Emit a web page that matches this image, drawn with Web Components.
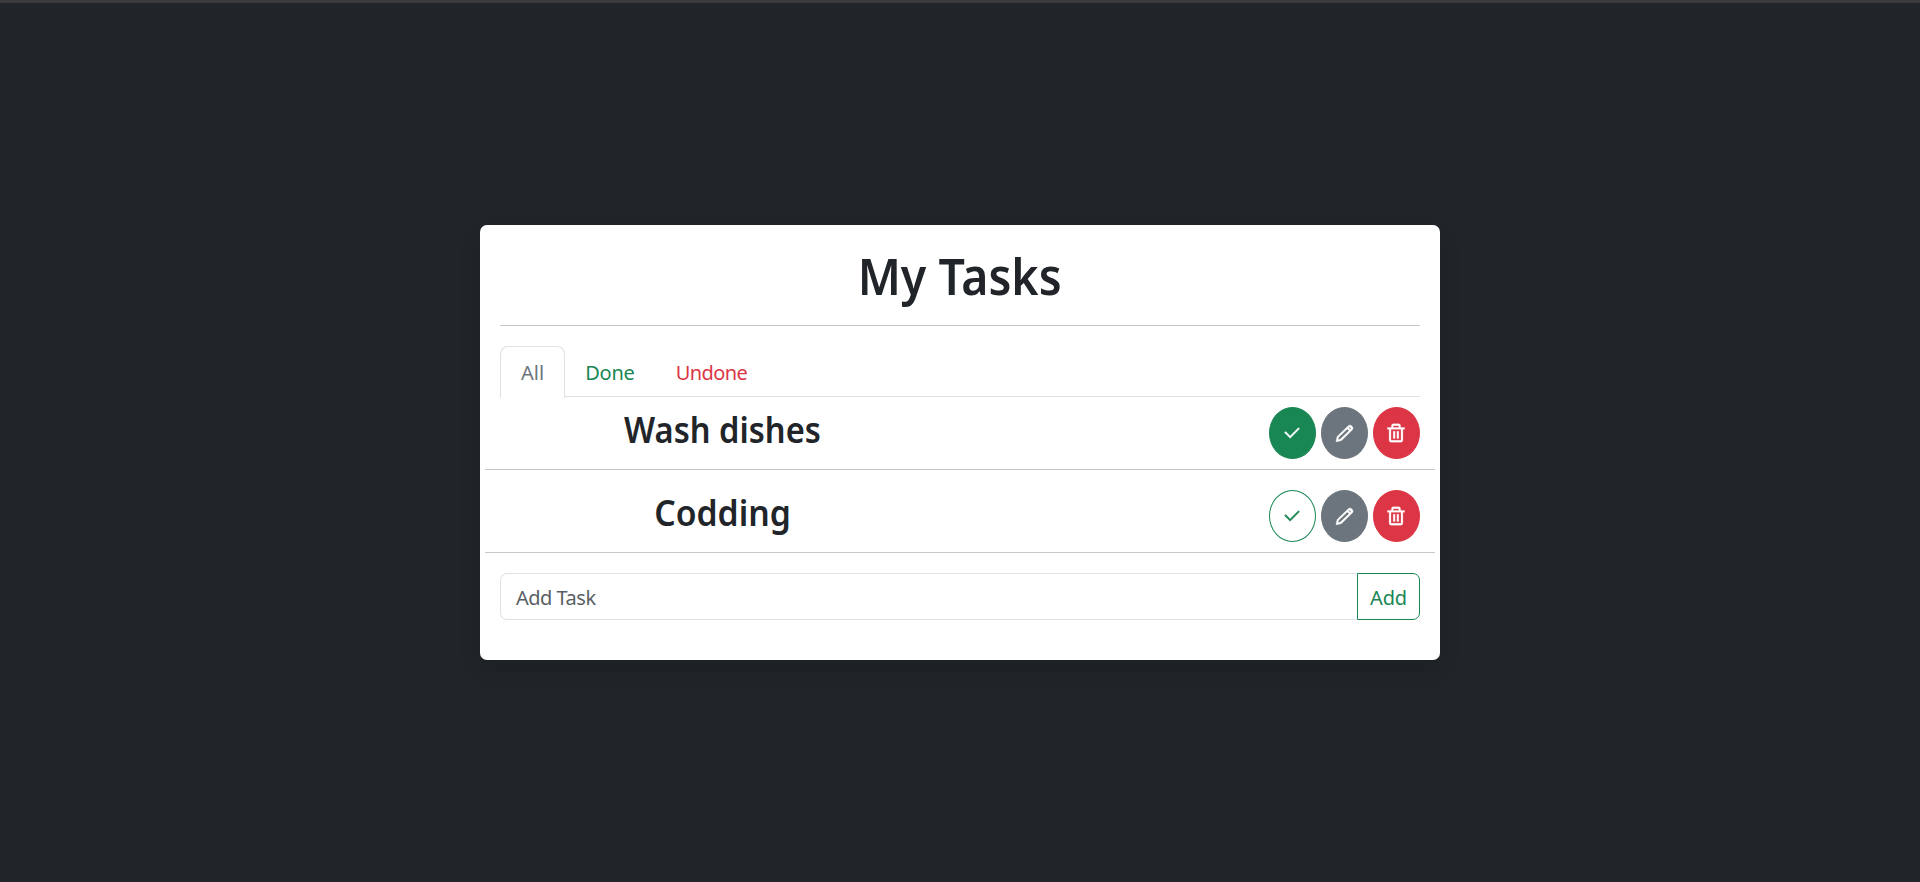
<!DOCTYPE html>
<html lang="en">
<head>
<meta charset="utf-8">
<title>My Tasks</title>
<style>
html,body{margin:0;height:100%}
body{background:#212529;color:#212529;font:370 20px/30px "Noto Sans","Open Sans",sans-serif}
</style>
</head>
<body>
<task-app></task-app>
<script>
const define = (name, html, setup) => customElements.define(name, class extends HTMLElement {
  connectedCallback() {
    if (this.shadowRoot) return;
    const t = document.createElement('template');
    t.innerHTML = html;
    this.attachShadow({mode: 'open'}).append(t.content.cloneNode(true));
    if (setup) setup(this, this.shadowRoot);
  }
});
const icons = {
  check: '<path stroke="currentColor" stroke-width=".5" d="M10 15.17 19 6.2 20.2 7.4 10 17.7 3.9 11.64 5.1 10.4z"/>',
  pencil: '<path stroke="currentColor" stroke-width=".4" fill-rule="evenodd" d="M16.2 3.2a2.8 2.8 0 0 1 4 0l.7.7a2.8 2.8 0 0 1 0 4L9 19.8a2 2 0 0 1-1 .5L3.2 21.4a.8.8 0 0 1-.9-.9L3.4 16a2 2 0 0 1 .5-1zM15.3 6.9 5.3 16.4 4.7 19l2.6-.7 9.9-9.5zM16.7 5.5 18.6 7.4 19.5 6.5 17.6 4.6z"/>',
  trash: '<path stroke="currentColor" stroke-width=".3" fill-rule="evenodd" d="M7 6V4a2 2 0 0 1 2-2h6a2 2 0 0 1 2 2v2h4.4v2H19.5v12a2 2 0 0 1-2 2h-11a2 2 0 0 1-2-2V8H2.6V6zM9 6h6V4H9zM6.500 8v12h11V8zM9 10h2v8H9zm4 0h2v8h-2z"/>'
};
define('round-button', `<style>
:host{display:flex;align-items:center;justify-content:center;box-sizing:border-box;width:47px;height:52px;border:1px solid;border-radius:50%;background:#6c757d;border-color:#6c757d;color:#fff}
:host([tone=done]){background:#198754;border-color:#198754}
:host([tone=open]){background:#fff;border-color:#198754;color:#198754}
:host([tone=danger]){background:#dc3545;border-color:#dc3545}
svg{display:block;width:22px;height:22px;fill:currentColor}
:host([icon=check]) svg{margin-right:.4px}
:host([icon=trash]) svg{margin-right:.4px}
:host([icon=pencil]) svg{width:21px;height:21px}
</style><svg viewBox="0 0 24 24"></svg>`, (h, r) => { r.querySelector('svg').innerHTML = icons[h.getAttribute('icon')]; });
define('task-row', `<style>
:host{display:flex;box-sizing:border-box;height:83px;margin:0 -15px;padding:10px 15px 0;border-bottom:1px solid #c7c8c9}
h2{margin:9px 0 0;width:445px;text-align:center;font-weight:580;font-size:35.5px;line-height:46px;transform:scaleX(var(--squeeze,1))}
div{margin-left:auto;display:flex;gap:5px;padding-top:10px}
:host([first]){height:73px;padding-top:0}
</style><h2><slot></slot></h2><div><round-button icon="check"></round-button><round-button icon="pencil"></round-button><round-button icon="trash" tone="danger"></round-button></div>`,
 (h, r) => r.querySelector('round-button').setAttribute('tone', h.hasAttribute('done') ? 'done' : 'open'));
define('nav-tab', `<style>
:host{display:block;box-sizing:border-box;margin-right:-.7px;padding:11px 20px 9px;height:52px;border:1px solid transparent;border-bottom:0;white-space:nowrap}
:host([active]){width:65px;border-color:#dee2e6;border-radius:8px 8px 0 0;background:#fff;color:#6c757d}
:host([tone=done]){color:#198754;letter-spacing:-.3px}
:host([tone=undone]){color:#dc3545;letter-spacing:-.6px}
</style><slot></slot>`);
define('task-tabs', `<style>
:host{display:flex;height:50px;border-bottom:1px solid #dee2e6}
</style><slot></slot>`);
define('add-task', `<style>
:host{display:flex;height:47px;margin-top:20px}
span,button{box-sizing:border-box;height:47px;font:inherit}
span{flex:1;border:1px solid #dee2e6;border-right:0;border-radius:7px 0 0 7px;padding:9px 15px;color:#5a5f64;letter-spacing:-.5px}
button{width:63px;margin:0;padding:2px 0 0;border:1px solid #198754;border-radius:0 7px 7px 0;background:#fff;color:#198754;letter-spacing:-.2px}
</style><span>Add Task</span><button>Add</button>`);
define('task-app', `<style>
:host{display:flex;flex-direction:column;align-items:center;box-sizing:border-box;height:882px;border-top:3px solid #3c3c3c;padding-top:222px}
section{box-sizing:border-box;width:960px;height:435px;padding:20px;background:#fff;border-radius:7px;box-shadow:0 10px 20px rgba(0,0,0,.15)}
h1{box-sizing:border-box;margin:0;padding-top:1px;height:81px;text-align:center;font-weight:580;font-size:50px;line-height:60px;border-bottom:1px solid #c7c8c9}
h1 span{display:inline-block;transform:scaleX(.93)}
task-tabs{margin-top:20px}
</style><section><h1><span>My Tasks</span></h1>
<task-tabs><nav-tab active>All</nav-tab><nav-tab tone="done">Done</nav-tab><nav-tab tone="undone">Undone</nav-tab></task-tabs>
<task-row first done style="--squeeze:.92">Wash dishes</task-row><task-row style="--squeeze:.95">Codding</task-row><add-task></add-task></section>`);
</script>
</body>
</html>
